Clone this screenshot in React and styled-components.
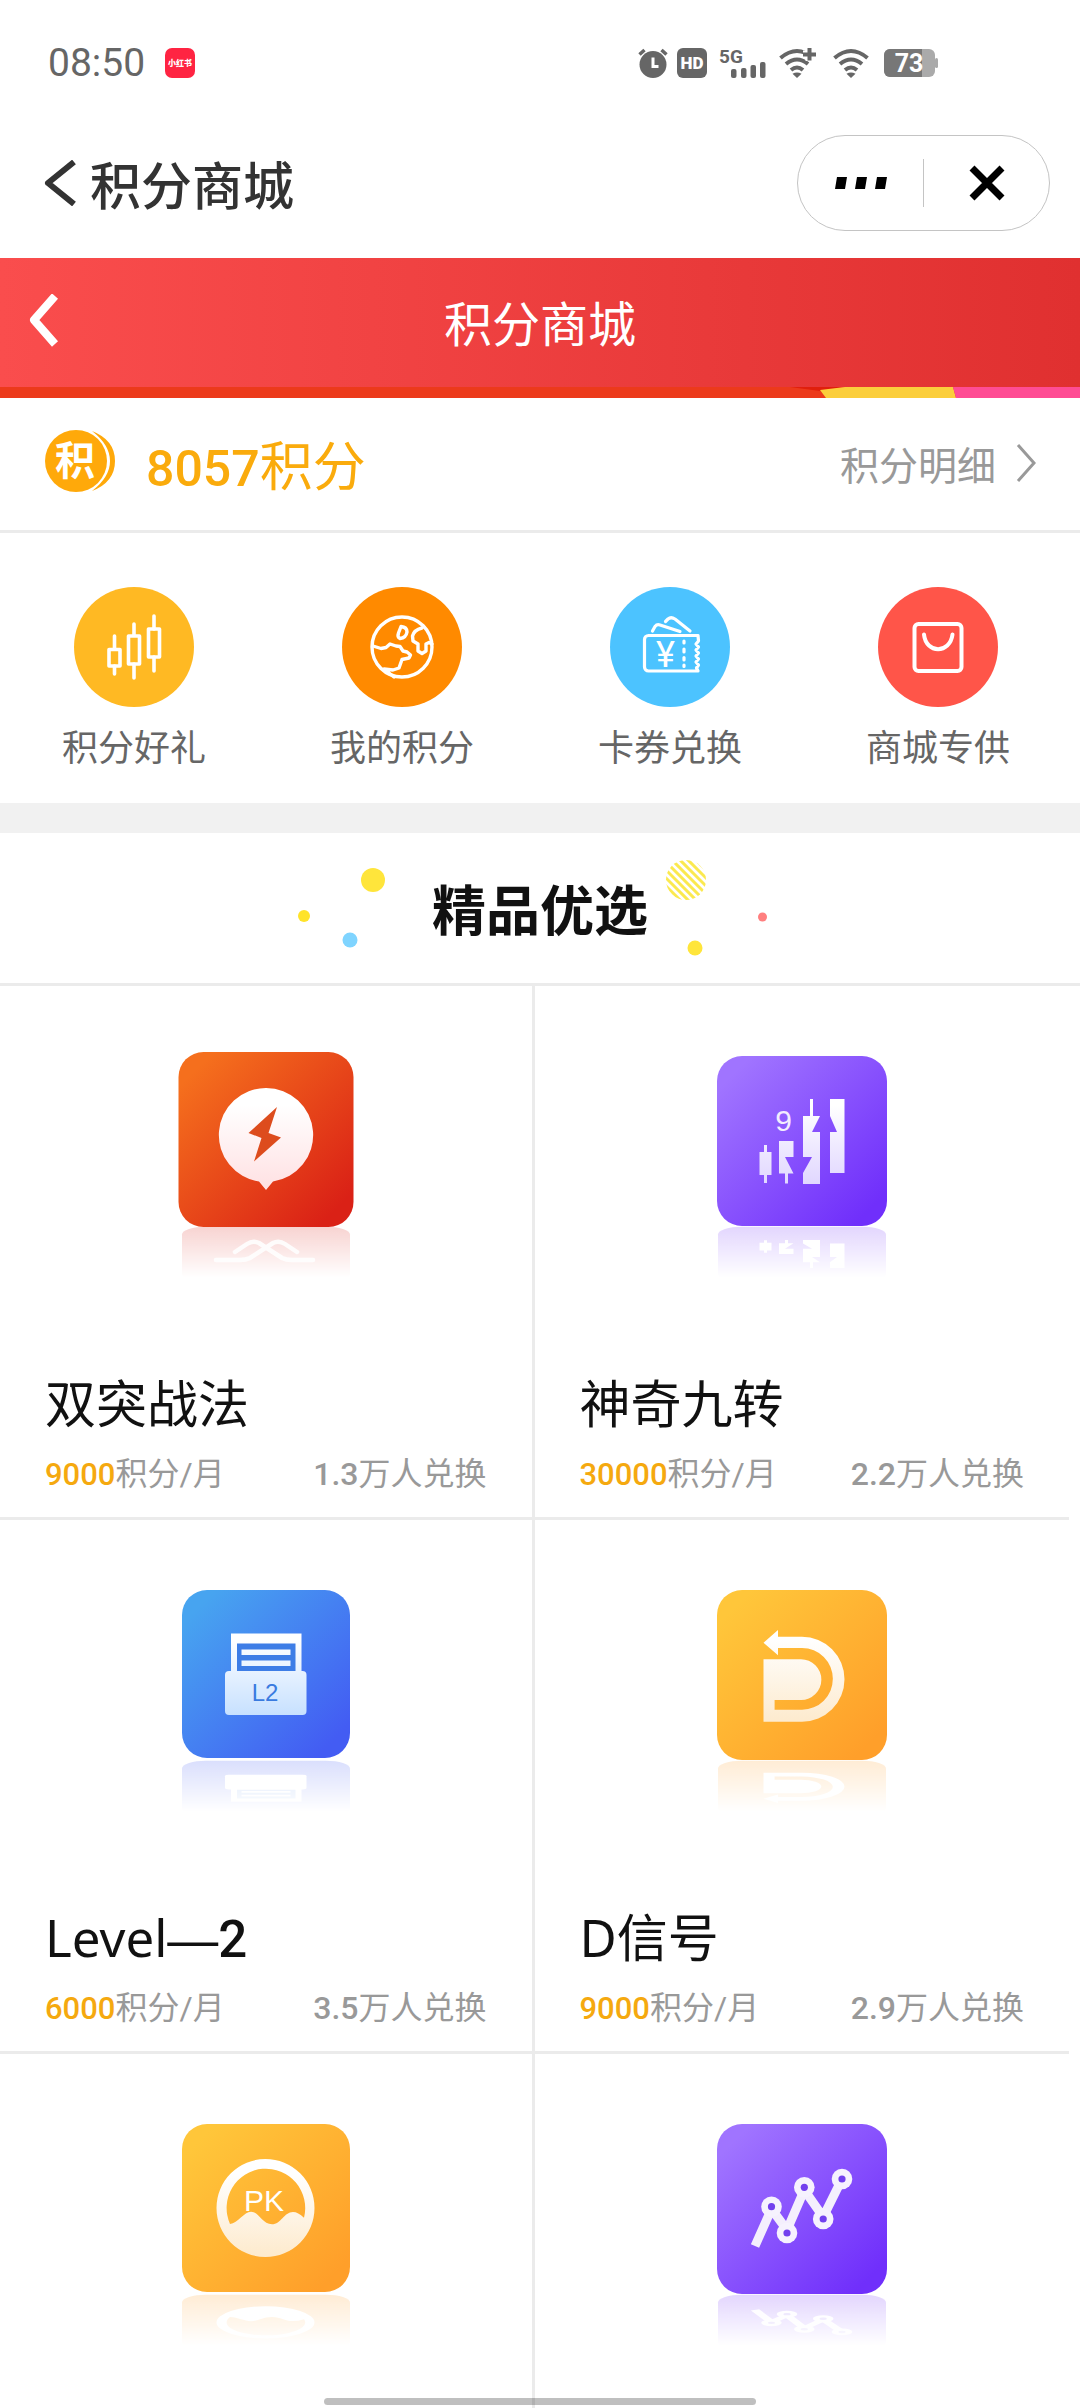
import React from "react";
import styled, { createGlobalStyle } from "styled-components";

const sans = `"Noto Sans CJK SC", sans-serif`;
const numeric = `Roboto, "Noto Sans CJK SC", sans-serif`;
const nameFont = `"Noto Sans", "Noto Sans CJK SC", sans-serif`;

const GlobalStyle = createGlobalStyle`
  *, *::before, *::after { box-sizing: border-box; }
  body { margin: 0; background: #fff; color: #111; font-family: ${sans}; }
  button { border: 0; padding: 0; background: none; font: inherit; color: inherit; cursor: pointer; }
  a { color: inherit; text-decoration: none; }
  svg { display: block; flex: none; }
  h1, h2, h3, p { margin: 0; font-weight: 400; }
`;

const Screen = styled.div`
  display: flex;
  flex-direction: column;
  height: 100vh;
  overflow: hidden;
`;

/* ---------- status bar ---------- */

const StatusBar = styled.div`
  display: flex;
  align-items: center;
  justify-content: space-between;
  padding: 42px 142px 24px 48px;
  color: #666;
`;

const StatusLeft = styled.div`
  display: flex;
  align-items: center;
  gap: 20px;
`;

const Clock = styled.span`
  font-family: ${numeric};
  font-size: 39px;
  line-height: 42px;
`;

const StatusIcons = styled.div`
  display: flex;
  align-items: center;
`;

const StatusIcon = styled.svg`
  margin-left: ${(p) => p.$gap || 0}px;
  overflow: visible;
`;

/* ---------- host title bar ---------- */

const TitleBar = styled.header`
  display: flex;
  align-items: center;
  justify-content: space-between;
  height: 150px;
  padding: 0 30px 0 44px;
`;

const HostBack = styled.button`
  display: flex;
  align-items: center;
  gap: 14px;
  color: #333;
  font-size: 51px;
  font-weight: 500;
  line-height: 60px;
`;

const Capsule = styled.div`
  display: flex;
  align-items: center;
  width: 253px;
  height: 96px;
  border: 1px solid #c4c4c4;
  border-radius: 48px;
`;

const CapsuleButton = styled.button`
  display: flex;
  flex: 1;
  align-items: center;
  justify-content: center;
  height: 48px;
  & + & { border-left: 1px solid #c4c4c4; }
`;

/* ---------- mall header ---------- */

const MallHeader = styled.div`
  display: grid;
  grid-template-columns: 1fr auto 1fr;
  align-items: center;
  height: 129px;
  padding: 0 28px 4px;
  background: linear-gradient(90deg, #fa4d4d, #e03030);
  color: #fff;
`;

const MallTitle = styled.h1`
  font-size: 48px;
  line-height: 56px;
`;

const BackButton = styled.button`
  justify-self: start;
`;

const BannerEdge = styled.svg`
  width: 100%;
  height: 11px;
`;

/* ---------- points balance ---------- */

const BalanceRow = styled.section`
  display: flex;
  align-items: center;
  justify-content: space-between;
  height: 135px;
  padding: 0 44px 2px;
  border-bottom: 3px solid #ebebeb;
`;

const Balance = styled.p`
  display: flex;
  align-items: center;
  gap: 28px;
  color: #faab0c;
  font-size: 53px;
  line-height: 60px;
`;

const Coin = styled.svg`
  overflow: visible;
`;

const Digits = styled.strong`
  color: ${(p) => p.$color || "inherit"};
  font-family: Roboto, sans-serif;
  font-size: ${(p) => (p.$size ? `${p.$size}px` : "inherit")};
  font-weight: 500;
  line-height: 1;
`;

const Dash = styled.span`
  font-family: "Liberation Sans", sans-serif;
  line-height: 1;
`;

const DetailLink = styled.a`
  display: flex;
  align-items: center;
  gap: 20px;
  color: #999;
  font-size: 39px;
  line-height: 44px;
`;

/* ---------- shortcuts ---------- */

const Shortcuts = styled.nav`
  display: grid;
  grid-template-columns: repeat(4, 1fr);
  padding: 54px 8px 38px 0;
`;

const Shortcut = styled.a`
  display: flex;
  flex-direction: column;
  align-items: center;
  gap: 18px;
  color: #666;
  font-size: 36px;
  line-height: 40px;
`;

const ShortcutDisc = styled.span`
  width: 120px;
  height: 120px;
  border-radius: 50%;
  background: ${(p) => p.$color};
`;

const Band = styled.div`
  height: 30px;
  background: #f1f1f1;
`;

/* ---------- catalogue ---------- */

const SectionHead = styled.div`
  display: flex;
  align-items: center;
  justify-content: center;
  height: 153px;
  border-bottom: 3px solid #ebebeb;
`;

const SectionTitle = styled.h2`
  font-size: 54px;
  font-weight: 700;
  line-height: 64px;
`;

const Catalogue = styled.div`
  display: grid;
  flex: 1;
  grid-template-columns: repeat(2, 1fr);
  grid-template-rows: auto auto 1fr;
  margin-right: 11px;
`;

const Card = styled.a`
  display: flex;
  flex-direction: column;
  padding: 34px 45px 23px;
  border-bottom: 3px solid #ebebeb;
  &:nth-child(odd) { border-right: 3px solid #ebebeb; }
  &:nth-last-child(-n + 2) { border-bottom: 0; }
`;

const ArtSvg = styled.svg`
  align-self: center;
`;

const CardName = styled.h3`
  margin-top: 93px;
  font-family: ${nameFont};
  font-size: 51px;
  line-height: 60px;
`;

const CardMeta = styled.p`
  display: flex;
  justify-content: space-between;
  height: 40px;
  margin-top: 21px;
  color: #999;
  font-family: ${numeric};
  font-size: 32px;
  line-height: 40px;
`;

const HomeIndicator = styled.div`
  position: fixed;
  bottom: 3px;
  left: 30%;
  width: 40%;
  height: 7px;
  border-radius: 4px;
  background: rgba(0, 0, 0, 0.25);
`;

/* ---------- drawings ---------- */

const WifiBands = () => (
  <>
    <path d="M1.500 10Q18 -4 34.500 10" />
    <path d="M7 16Q18 7 29 16" />
    <path d="M12 22Q18 17 24 22" />
    <path d="M18 30L13.500 25.800Q18 23 22.500 25.800Z" fill="#666" stroke="none" />
  </>
);

function Status() {
  return (
    <StatusBar>
      <StatusLeft>
        <Clock>08:50</Clock>
        <svg width="30" height="30" viewBox="0 0 30 30">
          <rect width="30" height="30" rx="7" fill="#ff2442" />
          <text x="15" y="18" textAnchor="middle" fontSize="8" fontWeight="900" fill="#fff" fontFamily={sans}>小红书</text>
        </svg>
      </StatusLeft>
      <StatusIcons>
        <StatusIcon width="30" height="30" viewBox="0 0 30 30" fill="#666">
          <circle cx="15" cy="16.500" r="13.500" />
          <path d="M1.500 6.500L6.500 2M28.500 6.500L23.500 2" stroke="#666" strokeWidth="3.500" />
          <path d="M15 9.500V18.500H20.500" fill="none" stroke="#fff" strokeWidth="3" />
        </StatusIcon>
        <StatusIcon $gap={9} width="30" height="30" viewBox="0 0 30 30">
          <rect width="30" height="30" rx="6" fill="#666" />
          <text x="15" y="21" textAnchor="middle" fontSize="17" fontWeight="900" fill="#fff" fontFamily="Roboto, sans-serif">HD</text>
        </StatusIcon>
        <StatusIcon $gap={12} width="48" height="30" viewBox="0 0 48 30" fill="#666">
          <text x="0" y="15" fontSize="19" fontWeight="700" fontFamily="Roboto, sans-serif">5G</text>
          <rect x="12" y="21" width="5.500" height="9" rx="2" />
          <rect x="22" y="20" width="5.500" height="10" rx="2" />
          <rect x="31.500" y="17" width="5.500" height="13" rx="2" />
          <rect x="41" y="14" width="5.500" height="16" rx="2" />
        </StatusIcon>
        <StatusIcon $gap={12} width="38" height="30" viewBox="0 0 38 30" fill="none" stroke="#666" strokeWidth="4">
          <WifiBands />
          <path d="M30.500 0V13M24 6.500H37" stroke="#fff" strokeWidth="8" />
          <path d="M30.500 0V12.500M24 6.500H37" />
        </StatusIcon>
        <StatusIcon $gap={16} width="36" height="30" viewBox="0 0 36 30" fill="none" stroke="#666" strokeWidth="4">
          <WifiBands />
        </StatusIcon>
        <StatusIcon $gap={15} width="54" height="28" viewBox="0 0 54 28">
          <path d="M6 0H45a6 6 0 0 1 6 6V22a6 6 0 0 1-6 6H6a6 6 0 0 1-6-6V6a6 6 0 0 1 6-6Z" fill="#aaa" />
          <rect x="51" y="9" width="3" height="10" rx="1.500" fill="#aaa" />
          <path d="M6 0H38V28H6a6 6 0 0 1-6-6V6a6 6 0 0 1 6-6Z" fill="#777" />
          <text x="25" y="23" textAnchor="middle" fontSize="25" fontWeight="700" fill="#fff" fontFamily="Roboto, sans-serif">73</text>
        </StatusIcon>
      </StatusIcons>
    </StatusBar>
  );
}

const CandlesIcon = () => (
  <svg width="120" height="120" viewBox="0 0 120 120" fill="none" stroke="#fff" strokeWidth="3.600" strokeLinecap="round" strokeLinejoin="round">
    <path d="M40.500 49V62M40.500 79V87M60 37V48M60 77V91M80 29V42M80 70V84" />
    <rect x="35" y="62.500" width="11" height="16.500" />
    <rect x="54.500" y="49" width="11" height="28" />
    <rect x="74.500" y="42" width="11" height="28" />
  </svg>
);

const GlobeIcon = () => (
  <svg width="120" height="120" viewBox="0 0 120 120" fill="none" stroke="#fff" strokeWidth="3.400" strokeLinecap="round" strokeLinejoin="round">
    <circle cx="60" cy="60" r="30" />
    <path d="M59 39.500Q65 40 65 45Q64 51 58 51.500Q55 50 56.500 46Z" />
    <path d="M80 41Q72 43 70.500 49L71 54L76 57V64L80 66.500L84 64V57L87 55.500L90 57" />
    <path d="M31 59L39 61.500L44 60.500L48 57L54 59L58 59.500L61 64L65 65L68.500 68L67 71L60 72.500L57 81L51 83L42 82L52 90" />
  </svg>
);

const TicketIcon = () => (
  <svg width="120" height="120" viewBox="0 0 120 120" fill="none" stroke="#fff" strokeWidth="3.200" strokeLinecap="round" strokeLinejoin="round">
    <path d="M42.500 44L45 39.500Q47 37 50 38L70 44.500" />
    <path d="M55.500 34.500L58 32Q61 29.500 65 32L80 44" />
    <path d="M88 48.500H38.500a4 4 0 0 0-4 4V80a4 4 0 0 0 4 4H88l-1.500-3 2-3-2.500-3 2.500-3-2.500-3 2.500-3-2.500-3 2.500-3-2.500-3 2.500-3Z" />
    <path d="M74 54V56M74 62V65M74 70.500V73M74 78V79.500" />
    <text x="55.500" y="79.500" textAnchor="middle" fontSize="36" fill="#fff" stroke="none" fontFamily="Roboto, sans-serif">¥</text>
  </svg>
);

const BagIcon = () => (
  <svg width="120" height="120" viewBox="0 0 120 120" fill="none" stroke="#fff" strokeWidth="4" strokeLinecap="round">
    <rect x="36.500" y="37" width="47" height="47" rx="4" />
    <path d="M46 47.500C48 67 72 67 74.500 47.500" />
  </svg>
);

const palettes = {
  red: { from: "#f56f1d", to: "#da2116", glyph: "#ffe2e4" },
  purple: { from: "#a074ff", to: "#702ffb", glyph: "#e0d6ff" },
  blue: { from: "#47a4f0", to: "#435cf3", glyph: "#c4dfff" },
  amber: { from: "#ffc63a", to: "#ff9f2a", glyph: "#fdebcf" },
};

/* Rounded tile with its glyph, and the faded reflection under it. */
function Art({ id, tone, size = 168, top = 36, shape, label, reflection }) {
  const p = palettes[tone];
  return (
    <ArtSvg width="240" height="260" viewBox="0 0 240 260" aria-hidden="true">
      <defs>
        <linearGradient id={`${id}-bg`} x1="0.1" y1="0.1" x2="0.9" y2="0.9">
          <stop offset="0" stopColor={p.from} />
          <stop offset="1" stopColor={p.to} />
        </linearGradient>
        <linearGradient id={`${id}-fg`} gradientUnits="userSpaceOnUse" x1="0" y1="85" x2="0" y2="165">
          <stop offset="0" stopColor="#fff" />
          <stop offset="1" stopColor={p.glyph} />
        </linearGradient>
        <linearGradient id={`${id}-fade`} x1="0" y1="0" x2="0" y2="1">
          <stop offset="0" stopColor="#fff" stopOpacity="0.2" />
          <stop offset="1" stopColor="#fff" stopOpacity="0" />
        </linearGradient>
        <mask id={`${id}-mask`} maskUnits="userSpaceOnUse" x="30" y="206" width="180" height="52">
          <rect x="30" y="206" width="180" height="52" fill={`url(#${id}-fade)`} />
        </mask>
      </defs>
      <g mask={`url(#${id}-mask)`}>
        <g transform="translate(0 274) scale(1 -0.33)">
          <rect x="36" y="36" width="168" height="168" rx="24" fill={p.to} />
          {!reflection && shape("#fff")}
        </g>
      </g>
      {reflection}
      <rect x={120 - size / 2} y={top} width={size} height={size} rx="25" fill={`url(#${id}-bg)`} />
      {shape(`url(#${id}-fg)`)}
      {label}
    </ArtSvg>
  );
}

const boltShape = (fg) => (
  <>
    <path d="M120 68a47 47 0 0 1 7 93.500L120 170L113 161.500A47 47 0 0 1 120 68Z" fill={fg} />
    <path d="M131 87L122.500 113L135 117.500L108 141.500L115.500 118L102.500 113Z" fill="#dd4c1d" />
  </>
);

const boltReflection = (
  <g fill="none" stroke="#fff" strokeWidth="4.500" strokeLinecap="round" opacity="0.9">
    <path d="M89 232L101 224Q107 220 113 223L136 238Q140 240 146 240H167" />
    <path d="M151 232L139 224Q133 220 127 223L104 238Q100 240 94 240H70" />
  </g>
);

const nineShape = (fg) => (
  <g fill={fg}>
    <path d="M82 125h3v7h4.500v23H85v8h-3v-8h-4.500v-23H82Z" />
    <path d="M97 121h14.500v16H103l8.500 16.500H106v10h-3v-10h-6Z" />
    <path d="M128 79h3v17h7l-8 16h8v52h-17v-11l9-16h-9V96h7Z" />
    <path d="M148 79h14.500v74H148v-41h7l-7-16Z" />
  </g>
);

const levelShape = (fg) => (
  <>
    <path d="M85 79.500H155.500V118H85Z" fill={fg} />
    <path d="M91 89.500H149.500V117H91Z" fill="#3d7de6" />
    <path d="M95.500 95.500H144.500V101H95.500ZM95.500 106.500H144.500V112H95.500Z" fill={fg} />
    <rect x="79" y="117" width="81.500" height="44" rx="4" fill={fg} />
  </>
);

const dShape = (fg) => (
  <path
    fill={fg}
    d="M81.500 88.700L96 76V82.700H120a42.500 42.500 0 0 1 0 85H81.500V105.300H119a20.350 20.350 0 0 1 0 40.700H92.600V155.700H120a30.850 30.850 0 0 0 0-61.700H96V101.300Z"
  />
);

const pkShape = (fg) => (
  <path
    fill={fg}
    fillRule="evenodd"
    d="M119.500 71a49 49 0 1 1 0 98a49 49 0 1 1 0-98ZM84 136A39.300 39.300 0 1 1 158 129.700Q152 124 147 124C138 124 135 136.300 126 136.300C116 136.300 113 123.700 105 123.700C98 123.700 92 135 84 136Z"
  />
);

const trendNodes = [[89.5, 118.7], [105, 145], [122.3, 99.3], [141.2, 131], [160, 91]];

const trendShape = () => (
  <>
    <path d="M73 158L89.500 121L105 142L122.300 102L141.200 129L160 91" fill="none" stroke="#f4effd" strokeWidth="9" />
    {trendNodes.map(([x, y]) => (
      <g key={x}>
        <circle cx={x} cy={y} r="10.300" fill="#f6f2fe" />
        <circle cx={x} cy={y} r="3.600" fill="#7240ee" />
      </g>
    ))}
  </>
);

const Label = ({ x, y, size, fill, children }) => (
  <text x={x} y={y} fontSize={size} fill={fill} textAnchor="middle" fontFamily={`"Liberation Sans", sans-serif`}>
    {children}
  </text>
);

/* ---------- data ---------- */

const shortcuts = [
  { label: "积分好礼", color: "#ffb923", Icon: CandlesIcon },
  { label: "我的积分", color: "#ff8a00", Icon: GlobeIcon },
  { label: "卡券兑换", color: "#4cc3ff", Icon: TicketIcon },
  { label: "商城专供", color: "#ff5549", Icon: BagIcon },
];

const products = [
  { id: "bolt", name: "双突战法", price: "9000", sold: "1.3", art: { tone: "red", size: 175, top: 32, shape: boltShape, reflection: boltReflection } },
  { id: "nine", name: "神奇九转", price: "30000", sold: "2.2", art: { tone: "purple", size: 170, shape: nineShape, label: <Label x="101.500" y="111" size="30" fill="#f3ecff">9</Label> } },
  { id: "level", name: <>Level<Dash>—</Dash><Digits>2</Digits></>, price: "6000", sold: "3.5", art: { tone: "blue", shape: levelShape, label: <Label x="119" y="147" size="24" fill="#3a7be0">L2</Label> } },
  { id: "dsign", name: "D信号", price: "9000", sold: "2.9", art: { tone: "amber", size: 170, shape: dShape } },
  { id: "pk", art: { tone: "amber", shape: pkShape, label: <Label x="118" y="123" size="30" fill="#fff">PK</Label> } },
  { id: "trend", art: { tone: "purple", size: 170, shape: trendShape } },
];

export default function App() {
  return (
    <Screen>
      <GlobalStyle />
      <Status />
      <TitleBar>
        <HostBack type="button">
          <svg width="32" height="46" viewBox="0 0 32 46" fill="none" stroke="#333" strokeWidth="6" strokeLinejoin="round">
            <path d="M30 2L4 23L30 44" />
          </svg>
          积分商城
        </HostBack>
        <Capsule>
          <CapsuleButton type="button" aria-label="更多">
            <svg width="54" height="12" viewBox="0 0 54 12">
              <path d="M3 0H13L11 12H1ZM23 0H33L31 12H21ZM43 0H53L51 12H41Z" />
            </svg>
          </CapsuleButton>
          <CapsuleButton type="button" aria-label="关闭">
            <svg width="36" height="36" viewBox="0 0 36 36" stroke="#000" strokeWidth="7">
              <path d="M3 3L33 33M33 3L3 33" />
            </svg>
          </CapsuleButton>
        </Capsule>
      </TitleBar>

      <MallHeader>
        <BackButton type="button" aria-label="返回">
          <svg width="32" height="54" viewBox="0 0 32 54" fill="none" stroke="#fff" strokeWidth="8" strokeLinejoin="round">
            <path d="M27 2L6 26L27 50" />
          </svg>
        </BackButton>
        <MallTitle>积分商城</MallTitle>
      </MallHeader>
      <BannerEdge viewBox="0 0 1080 11" preserveAspectRatio="none">
        <path d="M0 0H1080V11H0Z" fill="#ec3a1b" />
        <path d="M790 0H845L820 4Z" fill="#e01f0c" />
        <path d="M845 0H953L956 11H826L820 3Z" fill="#fbce3c" />
        <path d="M953 0H1080V11H956Z" fill="#ff4c94" />
      </BannerEdge>

      <BalanceRow>
        <Balance>
          <Coin width="74" height="68" viewBox="0 0 74 68">
            <circle cx="32" cy="32" r="31" fill="#ffa90a" />
            <path d="M48 2Q71 11 71 32Q71 53 48 62Q66 48 66 32Q66 16 48 2Z" fill="#ffa90a" />
            <text x="31" y="46" textAnchor="middle" fontSize="40" fontWeight="700" fill="#fff" fontFamily={sans}>积</text>
          </Coin>
          <span><Digits $size={50}>8057</Digits>积分</span>
        </Balance>
        <DetailLink href="#detail">
          积分明细
          <svg width="20" height="38" viewBox="0 0 20 38" fill="none" stroke="#999" strokeWidth="3">
            <path d="M2 1L18 19L2 37" />
          </svg>
        </DetailLink>
      </BalanceRow>

      <Shortcuts>
        {shortcuts.map(({ label, color, Icon }) => (
          <Shortcut key={label} href="#shortcut">
            <ShortcutDisc $color={color}><Icon /></ShortcutDisc>
            {label}
          </Shortcut>
        ))}
      </Shortcuts>
      <Band />

      <SectionHead>
        <svg width="150" height="120" viewBox="0 0 150 120">
          <circle cx="91" cy="32" r="12" fill="#ffe53b" />
          <circle cx="22" cy="68" r="6" fill="#ffe32a" />
          <circle cx="68" cy="92" r="7.500" fill="#7fd4ff" />
        </svg>
        <SectionTitle>精品优选</SectionTitle>
        <svg width="150" height="120" viewBox="0 0 150 120">
          <clipPath id="stripes"><circle cx="38" cy="32" r="20" /></clipPath>
          <g clipPath="url(#stripes)" stroke="#fbe94f" strokeWidth="3">
            <path d="M-16 12L34 62M-8 12L42 62M0 12L50 62M8 12L58 62M16 12L66 62M16 4L66 54M24 4L74 54M24 -4L74 46M32 -4L82 46" />
          </g>
          <circle cx="47" cy="100" r="7.500" fill="#ffe53b" />
          <circle cx="114.500" cy="69" r="4.500" fill="#ff7f7f" />
        </svg>
      </SectionHead>

      <Catalogue>
        {products.map(({ id, name, price, sold, art }) => (
          <Card key={id} href={`#${id}`}>
            <Art id={id} {...art} />
            {name && (
              <>
                <CardName>{name}</CardName>
                <CardMeta>
                  <span><Digits $color="#f5a90f" $size={31}>{price}</Digits>积分/月</span>
                  <span><Digits>{sold}</Digits>万人兑换</span>
                </CardMeta>
              </>
            )}
          </Card>
        ))}
      </Catalogue>
      <HomeIndicator />
    </Screen>
  );
}
